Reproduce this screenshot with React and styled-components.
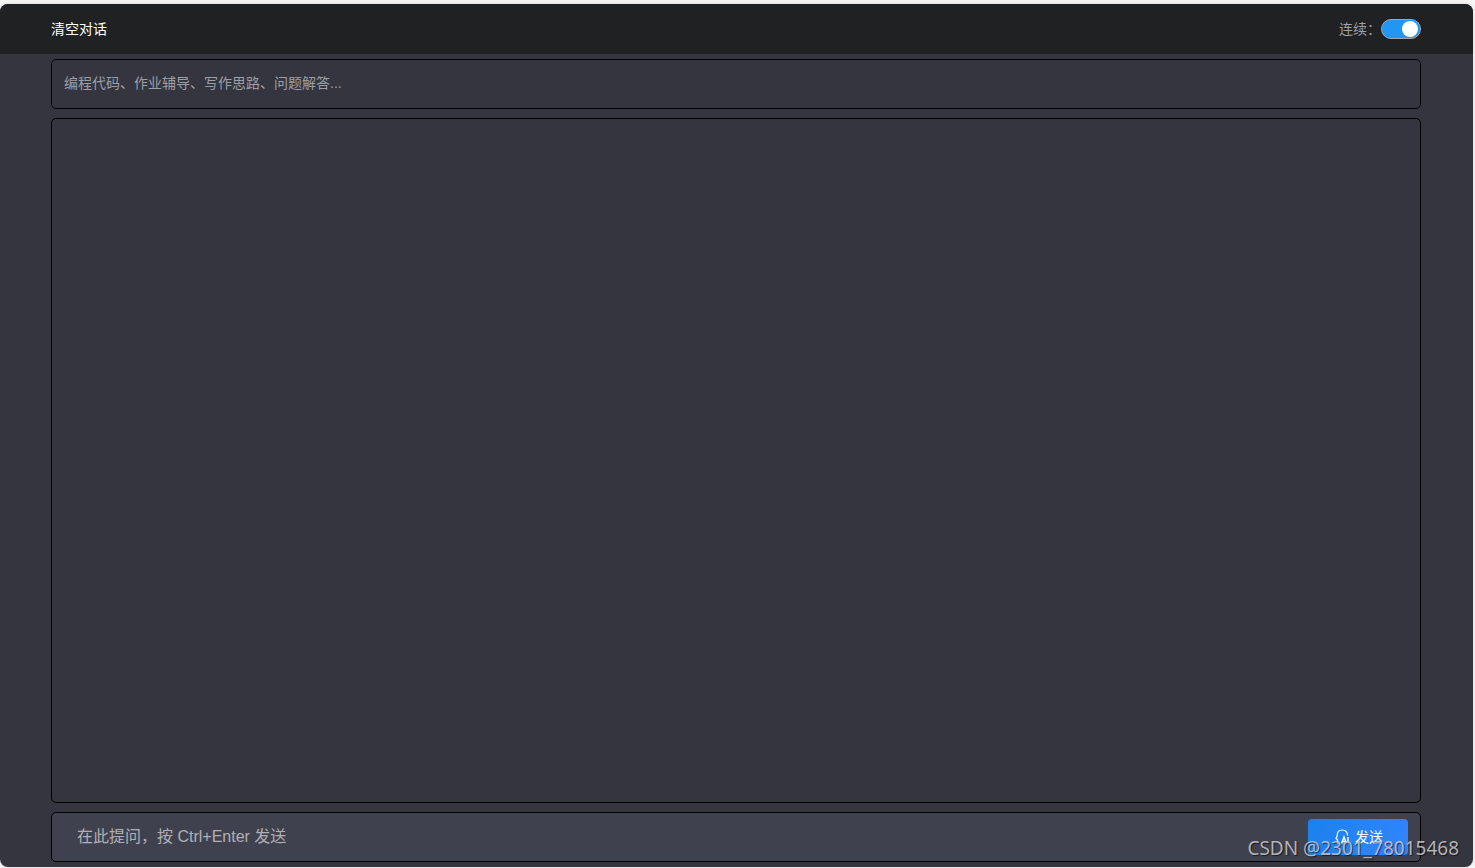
import React, { useState } from "react";
import styled, { createGlobalStyle } from "styled-components";

const GlobalStyle = createGlobalStyle`
  *, *::before, *::after { box-sizing: border-box; }
  body {
    margin: 0;
    background: #f7f7f8;
    font-family: "Liberation Sans", "Noto Sans CJK SC", sans-serif;
    font-size: 14px;
    line-height: 20px;
  }
  button, input { font-family: inherit; }
`;

const Page = styled.div`
  position: relative;
  display: flex;
  min-height: 100vh;
  padding: 4px 2px 1px 0;
`;

const Panel = styled.main`
  flex: 1;
  display: flex;
  flex-direction: column;
  overflow: hidden;
  border-radius: 8px;
  background: #353540;
  box-shadow: 0 0 4px rgba(0, 0, 0, 0.15);
`;

const Header = styled.header`
  display: flex;
  align-items: center;
  justify-content: space-between;
  height: 50px;
  padding: 0 52px 0 51px;
  background: #202123;
`;

const ClearButton = styled.button`
  padding: 0;
  border: 0;
  background: none;
  color: #fff;
  font-size: 14px;
  line-height: 20px;
  cursor: pointer;
`;

const SwitchLabel = styled.label`
  display: flex;
  align-items: center;
  color: #9b9fa6;
  cursor: pointer;
`;

const Switch = styled.input`
  appearance: none;
  display: flex;
  align-items: center;
  width: 40px;
  height: 20px;
  margin: 0;
  padding: 0 2px;
  border: 1px solid #a0a5b4;
  border-radius: 10px;
  background: #55565f;
  cursor: pointer;

  &::before {
    content: "";
    width: 16px;
    height: 16px;
    border-radius: 50%;
    background: #fff;
  }

  &:checked {
    justify-content: flex-end;
    background: #2196f3;
  }
`;

const Content = styled.div`
  flex: 1;
  display: flex;
  flex-direction: column;
  gap: 9px;
  padding: 5px 52px 5px 51px;
`;

const Box = styled.section`
  border: 1px solid #000;
  border-radius: 5px;
`;

const Intro = styled(Box)`
  height: 50px;
  padding: 13px 12px;
  color: #9b9fa6;
`;

const Messages = styled(Box)`
  flex: 1;
`;

const Composer = styled.form`
  display: flex;
  align-items: center;
  height: 50px;
  padding: 0 12px 0 25px;
  border: 1px solid #000;
  border-radius: 5px;
  background: #40414f;
`;

const Question = styled.input`
  flex: 1;
  min-width: 0;
  height: 48px;
  padding: 0;
  border: 0;
  outline: 0;
  background: none;
  color: #fff;
  font-size: 16px;

  &::placeholder {
    color: #b0b0b4;
    opacity: 1;
  }
`;

const SendButton = styled.button`
  display: flex;
  align-items: center;
  justify-content: center;
  gap: 6px;
  width: 100px;
  height: 36px;
  padding: 0 0 0 2px;
  border: 0;
  border-radius: 4px;
  background: linear-gradient(120deg, #1a82ea, #3484ff);
  color: #fff;
  font-size: 14px;
  line-height: 20px;
  cursor: pointer;
`;

const Watermark = styled.span`
  position: absolute;
  right: 16px;
  bottom: 8px;
  color: rgba(205, 205, 208, 0.85);
  font-family: "Noto Sans", sans-serif;
  font-size: 19px;
  line-height: 24px;
  text-shadow: 1px 1px 1px rgba(0, 0, 0, 0.6);
  pointer-events: none;
`;

function SendIcon() {
  return (
    <svg width="14" height="16" viewBox="0 0 14 16" fill="none" stroke="#fff" aria-hidden="true">
      <path
        d="M5 14.500H2.500V10.500L1 9.500L2.300 6.500C2 3 4 1 7 1c3.300 0 5.500 2.200 5.500 5.500"
        strokeWidth="1.200"
        strokeLinejoin="round"
      />
      <path d="M6.500 14.500L9 8L11.500 14.500M7.500 12.500H10.500M13 8v6.500" strokeWidth="1.400" />
    </svg>
  );
}

export default function App() {
  const [continuous, setContinuous] = useState(true);
  const [question, setQuestion] = useState("");

  return (
    <>
      <GlobalStyle />
      <Page>
        <Panel>
          <Header>
            <ClearButton type="button" onClick={() => setQuestion("")}>清空对话</ClearButton>
            <SwitchLabel>
              连续：
              <Switch
                type="checkbox"
                checked={continuous}
                onChange={(e) => setContinuous(e.target.checked)}
              />
            </SwitchLabel>
          </Header>
          <Content>
            <Intro>编程代码、作业辅导、写作思路、问题解答...</Intro>
            <Messages aria-label="对话" />
            <Composer onSubmit={(e) => e.preventDefault()}>
              <Question
                aria-label="提问"
                placeholder="在此提问，按 Ctrl+Enter 发送"
                value={question}
                onChange={(e) => setQuestion(e.target.value)}
              />
              <SendButton type="submit">
                <SendIcon />
                发送
              </SendButton>
            </Composer>
          </Content>
        </Panel>
        <Watermark>CSDN @2301_78015468</Watermark>
      </Page>
    </>
  );
}
